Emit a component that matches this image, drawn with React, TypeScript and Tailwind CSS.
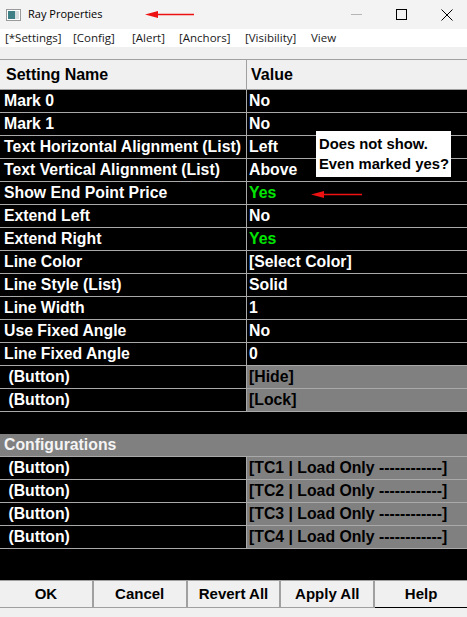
import React from 'react'

const rows: { name: string; value: string; green?: boolean; button?: boolean }[] = [
  { name: 'Mark 0', value: 'No' },
  { name: 'Mark 1', value: 'No' },
  { name: 'Text Horizontal Alignment (List)', value: 'Left' },
  { name: 'Text Vertical Alignment (List)', value: 'Above' },
  { name: 'Show End Point Price', value: 'Yes', green: true },
  { name: 'Extend Left', value: 'No' },
  { name: 'Extend Right', value: 'Yes', green: true },
  { name: 'Line Color', value: '[Select Color]' },
  { name: 'Line Style (List)', value: 'Solid' },
  { name: 'Line Width', value: '1' },
  { name: 'Use Fixed Angle', value: 'No' },
  { name: 'Line Fixed Angle', value: '0' },
  { name: ' (Button)', value: '[Hide]', button: true },
  { name: ' (Button)', value: '[Lock]', button: true },
]

const configs = ['[TC1 | Load Only ------------]', '[TC2 | Load Only ------------]', '[TC3 | Load Only ------------]', '[TC4 | Load Only ------------]']

// menu labels with the slot width each one takes in the strip
const menu = [
  { label: '[*Settings]', w: 'w-[68px]' },
  { label: '[Config]', w: 'w-[59px]' },
  { label: '[Alert]', w: 'w-[47px]' },
  { label: '[Anchors]', w: 'w-[66px]' },
  { label: '[Visibility]', w: 'w-[66px]' },
  { label: 'View', w: 'w-[40px]' },
]

function Arrow({ width }: { width: number }) {
  return (
    <svg width={width} height="9" viewBox={`0 0 ${width} 9`}>
      <polygon points="0,4.5 13,1 13,8" fill="#ee1111" />
      <line x1="12" y1="4.5" x2={width} y2="4.5" stroke="#ee1111" strokeWidth="1.3" />
    </svg>
  )
}

function Row({ name, value, green, button }: { name: string; value: string; green?: boolean; button?: boolean }) {
  return (
    <div className="flex h-[23px] border-b border-[#a9a9a9]">
      <div className="w-[247px] shrink-0 border-r border-[#a9a9a9] pl-[4px] text-white whitespace-pre leading-[22px]">
        {name}
      </div>
      <div
        className={
          button
            ? 'flex-1 bg-[#808080] pl-[2px] text-black leading-[22px]'
            : green
              ? 'flex-1 pl-[2px] text-[#00e600] leading-[22px]'
              : 'flex-1 pl-[2px] text-white leading-[22px]'
        }
      >
        {value}
      </div>
    </div>
  )
}

export default function App() {
  return (
    <div className="flex h-[617px] w-[467px] flex-col overflow-hidden bg-[#f0f0f0] font-['Liberation_Sans',Arial,sans-serif]">
      {/* title bar */}
      <div className="flex h-[29px] shrink-0 items-center bg-[#f3f3f3] font-['Open_Sans','Noto_Sans',sans-serif] text-[11px] text-black">
        <div className="ml-[6px] flex h-[12px] w-[15px] items-center border border-[#9a9a9a] bg-white p-[1px]">
          <div className="h-full w-[7px] bg-[#3f7f86]" />
          <div className="h-full flex-1 bg-[#d8dde0]" />
        </div>
        <span className="ml-[7px]">Ray Properties</span>
        <div className="ml-[42px] flex">
          <Arrow width={49} />
        </div>
        <div className="ml-auto flex items-center">
          <div className="h-px w-[11px] bg-[#b5b5b5]" />
          <div className="ml-[34px] h-[11px] w-[11px] border border-black" />
          <svg className="ml-[34px] mr-[14px]" width="12" height="12" viewBox="0 0 12 12">
            <path d="M0.5 0.5 L11.5 11.5 M11.5 0.5 L0.5 11.5" stroke="#000" strokeWidth="1" />
          </svg>
        </div>
      </div>

      {/* menu */}
      <div className="flex h-[18px] shrink-0 items-center bg-white pl-[5px] font-['Open_Sans','Noto_Sans',sans-serif] text-[11.5px] text-[#1a1a1a]">
        {menu.map((m) => (
          <span key={m.label} className={`${m.w} shrink-0 whitespace-nowrap`}>
            {m.label}
          </span>
        ))}
      </div>
      <div className="h-[12px] shrink-0 bg-[#f0f0f0]" />

      {/* table */}
      <div className="relative flex flex-1 flex-col bg-black text-[15.8px] font-bold">
        <div className="flex h-[31px] shrink-0 border-y border-[#a0a0a0] bg-[#f0f0f0] text-[16px] text-black">
          <div className="w-[247px] border-r border-[#a0a0a0] pl-[6px] leading-[29px]">Setting Name</div>
          <div className="flex-1 pl-[4px] leading-[29px]">Value</div>
        </div>
        {rows.map((r, i) => (
          <Row key={i} {...r} />
        ))}
        <div className="h-[22px] shrink-0" />
        <div className="h-[23px] shrink-0 border-b border-[#a9a9a9] bg-[#808080] pl-[4px] leading-[22px] text-[#f4f4f4]">
          Configurations
        </div>
        {configs.map((c) => (
          <Row key={c} name=" (Button)" value={c} button />
        ))}

        <div className="absolute left-[316px] top-[72px] w-[135px] whitespace-nowrap bg-white px-[3px] py-[3px] text-[14.8px] leading-[20px] text-black">
          Does not show.
          <br />
          Even marked yes?
        </div>
        <div className="absolute left-[311px] top-[131px] flex">
          <Arrow width={51} />
        </div>
      </div>

      {/* buttons */}
      <div className="flex h-[28px] shrink-0 border-t border-[#a0a0a0] bg-[#f0f0f0] text-[15px] font-bold text-black">
        {['OK', 'Cancel', 'Revert All', 'Apply All', 'Help'].map((b, i) => (
          <div
            key={b}
            className={
              i < 4
                ? 'flex flex-1 items-center justify-center border-r-2 border-[#a0a0a0] border-b'
                : 'flex flex-1 items-center justify-center border-b'
            }
          >
            {b}
          </div>
        ))}
      </div>
      <div className="h-[9px] shrink-0 bg-[#f0f0f0]" />
    </div>
  )
}
